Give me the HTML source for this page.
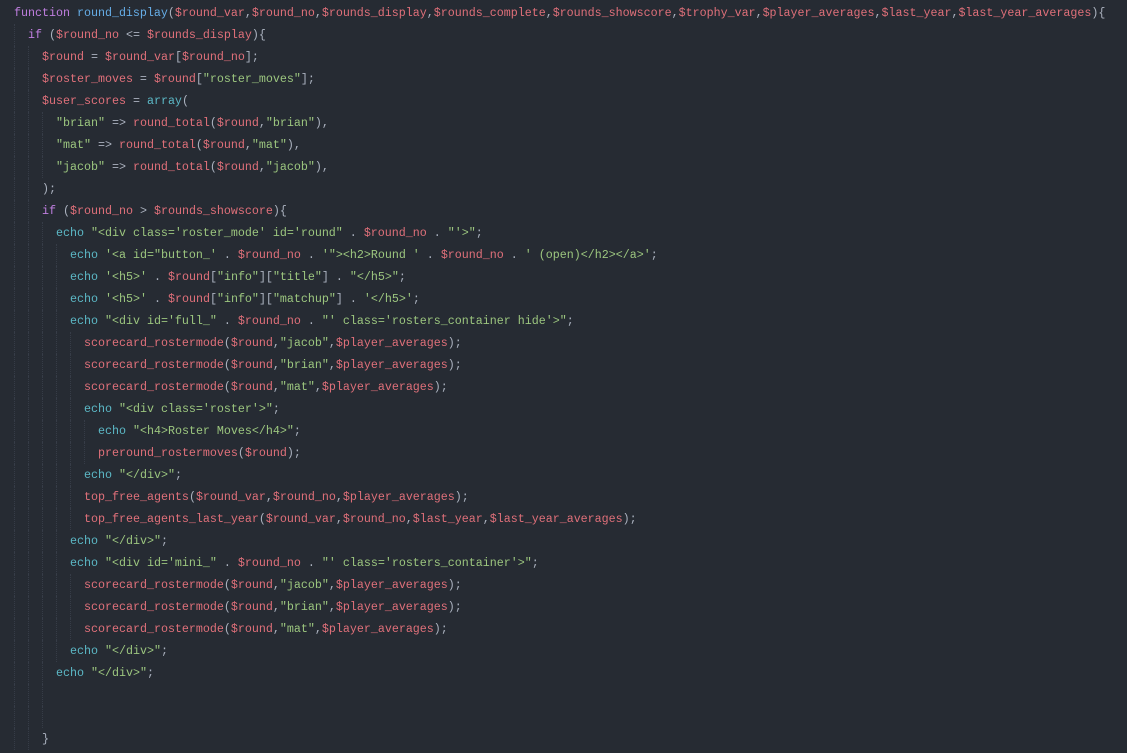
<!DOCTYPE html>
<html><head><meta charset="utf-8"><style>
html,body{margin:0;padding:0;background:#262b33;width:1127px;height:753px;overflow:hidden}
.c{position:absolute;left:14px;top:2px;font-family:"Liberation Mono",monospace;font-size:11.67px;color:#abb2bf}
.l{height:22px;line-height:22px;white-space:pre}
.i{display:inline-block;width:14px;height:22px;vertical-align:top;box-sizing:border-box;border-left:1px dotted #363c47}
.k{color:#c07fe0}.f{color:#66aee8}.v{color:#e0707a}.s{color:#9cc67f}.e{color:#5cb8c6}
</style></head><body><div class="c">
<div class="l"><span class="k">function</span> <span class="f">round_display</span>(<span class="v">$round_var</span>,<span class="v">$round_no</span>,<span class="v">$rounds_display</span>,<span class="v">$rounds_complete</span>,<span class="v">$rounds_showscore</span>,<span class="v">$trophy_var</span>,<span class="v">$player_averages</span>,<span class="v">$last_year</span>,<span class="v">$last_year_averages</span>){</div>
<div class="l"><span class="i"></span><span class="k">if</span> (<span class="v">$round_no</span> &lt;= <span class="v">$rounds_display</span>){</div>
<div class="l"><span class="i"></span><span class="i"></span><span class="v">$round</span> = <span class="v">$round_var</span>[<span class="v">$round_no</span>];</div>
<div class="l"><span class="i"></span><span class="i"></span><span class="v">$roster_moves</span> = <span class="v">$round</span>[<span class="s">"roster_moves"</span>];</div>
<div class="l"><span class="i"></span><span class="i"></span><span class="v">$user_scores</span> = <span class="e">array</span>(</div>
<div class="l"><span class="i"></span><span class="i"></span><span class="i"></span><span class="s">"brian"</span> =&gt; <span class="v">round_total</span>(<span class="v">$round</span>,<span class="s">"brian"</span>),</div>
<div class="l"><span class="i"></span><span class="i"></span><span class="i"></span><span class="s">"mat"</span> =&gt; <span class="v">round_total</span>(<span class="v">$round</span>,<span class="s">"mat"</span>),</div>
<div class="l"><span class="i"></span><span class="i"></span><span class="i"></span><span class="s">"jacob"</span> =&gt; <span class="v">round_total</span>(<span class="v">$round</span>,<span class="s">"jacob"</span>),</div>
<div class="l"><span class="i"></span><span class="i"></span>);</div>
<div class="l"><span class="i"></span><span class="i"></span><span class="k">if</span> (<span class="v">$round_no</span> &gt; <span class="v">$rounds_showscore</span>){</div>
<div class="l"><span class="i"></span><span class="i"></span><span class="i"></span><span class="e">echo</span> <span class="s">"&lt;div class='roster_mode' id='round"</span> . <span class="v">$round_no</span> . <span class="s">"'&gt;"</span>;</div>
<div class="l"><span class="i"></span><span class="i"></span><span class="i"></span><span class="i"></span><span class="e">echo</span> <span class="s">'&lt;a id="button_'</span> . <span class="v">$round_no</span> . <span class="s">'"&gt;&lt;h2&gt;Round '</span> . <span class="v">$round_no</span> . <span class="s">' (open)&lt;/h2&gt;&lt;/a&gt;'</span>;</div>
<div class="l"><span class="i"></span><span class="i"></span><span class="i"></span><span class="i"></span><span class="e">echo</span> <span class="s">'&lt;h5&gt;'</span> . <span class="v">$round</span>[<span class="s">"info"</span>][<span class="s">"title"</span>] . <span class="s">"&lt;/h5&gt;"</span>;</div>
<div class="l"><span class="i"></span><span class="i"></span><span class="i"></span><span class="i"></span><span class="e">echo</span> <span class="s">'&lt;h5&gt;'</span> . <span class="v">$round</span>[<span class="s">"info"</span>][<span class="s">"matchup"</span>] . <span class="s">'&lt;/h5&gt;'</span>;</div>
<div class="l"><span class="i"></span><span class="i"></span><span class="i"></span><span class="i"></span><span class="e">echo</span> <span class="s">"&lt;div id='full_"</span> . <span class="v">$round_no</span> . <span class="s">"' class='rosters_container hide'&gt;"</span>;</div>
<div class="l"><span class="i"></span><span class="i"></span><span class="i"></span><span class="i"></span><span class="i"></span><span class="v">scorecard_rostermode</span>(<span class="v">$round</span>,<span class="s">"jacob"</span>,<span class="v">$player_averages</span>);</div>
<div class="l"><span class="i"></span><span class="i"></span><span class="i"></span><span class="i"></span><span class="i"></span><span class="v">scorecard_rostermode</span>(<span class="v">$round</span>,<span class="s">"brian"</span>,<span class="v">$player_averages</span>);</div>
<div class="l"><span class="i"></span><span class="i"></span><span class="i"></span><span class="i"></span><span class="i"></span><span class="v">scorecard_rostermode</span>(<span class="v">$round</span>,<span class="s">"mat"</span>,<span class="v">$player_averages</span>);</div>
<div class="l"><span class="i"></span><span class="i"></span><span class="i"></span><span class="i"></span><span class="i"></span><span class="e">echo</span> <span class="s">"&lt;div class='roster'&gt;"</span>;</div>
<div class="l"><span class="i"></span><span class="i"></span><span class="i"></span><span class="i"></span><span class="i"></span><span class="i"></span><span class="e">echo</span> <span class="s">"&lt;h4&gt;Roster Moves&lt;/h4&gt;"</span>;</div>
<div class="l"><span class="i"></span><span class="i"></span><span class="i"></span><span class="i"></span><span class="i"></span><span class="i"></span><span class="v">preround_rostermoves</span>(<span class="v">$round</span>);</div>
<div class="l"><span class="i"></span><span class="i"></span><span class="i"></span><span class="i"></span><span class="i"></span><span class="e">echo</span> <span class="s">"&lt;/div&gt;"</span>;</div>
<div class="l"><span class="i"></span><span class="i"></span><span class="i"></span><span class="i"></span><span class="i"></span><span class="v">top_free_agents</span>(<span class="v">$round_var</span>,<span class="v">$round_no</span>,<span class="v">$player_averages</span>);</div>
<div class="l"><span class="i"></span><span class="i"></span><span class="i"></span><span class="i"></span><span class="i"></span><span class="v">top_free_agents_last_year</span>(<span class="v">$round_var</span>,<span class="v">$round_no</span>,<span class="v">$last_year</span>,<span class="v">$last_year_averages</span>);</div>
<div class="l"><span class="i"></span><span class="i"></span><span class="i"></span><span class="i"></span><span class="e">echo</span> <span class="s">"&lt;/div&gt;"</span>;</div>
<div class="l"><span class="i"></span><span class="i"></span><span class="i"></span><span class="i"></span><span class="e">echo</span> <span class="s">"&lt;div id='mini_"</span> . <span class="v">$round_no</span> . <span class="s">"' class='rosters_container'&gt;"</span>;</div>
<div class="l"><span class="i"></span><span class="i"></span><span class="i"></span><span class="i"></span><span class="i"></span><span class="v">scorecard_rostermode</span>(<span class="v">$round</span>,<span class="s">"jacob"</span>,<span class="v">$player_averages</span>);</div>
<div class="l"><span class="i"></span><span class="i"></span><span class="i"></span><span class="i"></span><span class="i"></span><span class="v">scorecard_rostermode</span>(<span class="v">$round</span>,<span class="s">"brian"</span>,<span class="v">$player_averages</span>);</div>
<div class="l"><span class="i"></span><span class="i"></span><span class="i"></span><span class="i"></span><span class="i"></span><span class="v">scorecard_rostermode</span>(<span class="v">$round</span>,<span class="s">"mat"</span>,<span class="v">$player_averages</span>);</div>
<div class="l"><span class="i"></span><span class="i"></span><span class="i"></span><span class="i"></span><span class="e">echo</span> <span class="s">"&lt;/div&gt;"</span>;</div>
<div class="l"><span class="i"></span><span class="i"></span><span class="i"></span><span class="e">echo</span> <span class="s">"&lt;/div&gt;"</span>;</div>
<div class="l"><span class="i"></span><span class="i"></span><span class="i"></span></div>
<div class="l"><span class="i"></span><span class="i"></span><span class="i"></span></div>
<div class="l"><span class="i"></span><span class="i"></span>}</div>
</div></body></html>
